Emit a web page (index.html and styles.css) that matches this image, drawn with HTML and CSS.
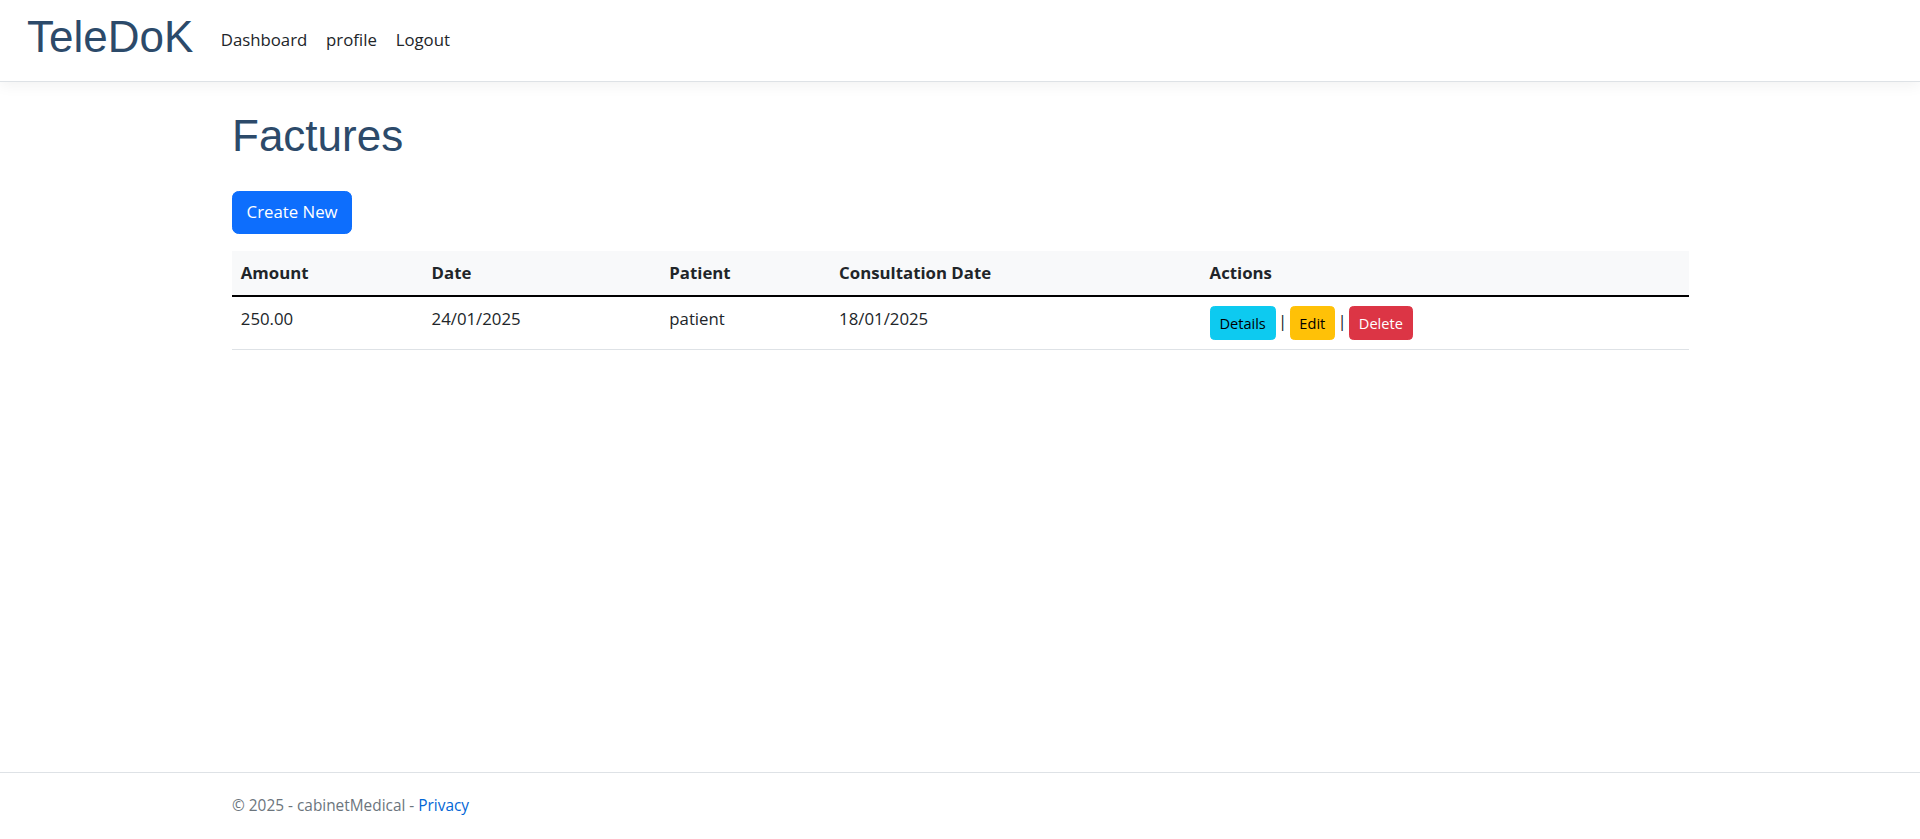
FILE: index.html
```html
<!DOCTYPE html>
<html lang="fr">
<head>
<meta charset="utf-8">
<title>Factures - cabinetMedical</title>
<link rel="stylesheet" href="styles.css">
</head>
<body>
<header class="site-header">
  <nav class="navbar">
    <a class="brand" href="#">TeleDoK</a>
    <ul class="nav-links">
      <li><a class="nav-link" href="#">Dashboard</a></li>
      <li><a class="nav-link" href="#">profile</a></li>
      <li><a class="nav-link" href="#">Logout</a></li>
    </ul>
  </nav>
</header>
<main class="container main">
  <h1 class="page-title">Factures</h1>
  <p class="actions-top"><a class="btn btn-primary" href="#">Create New</a></p>
  <table class="table">
    <thead>
      <tr>
        <th class="col-amount">Amount</th>
        <th class="col-date">Date</th>
        <th class="col-patient">Patient</th>
        <th class="col-cdate">Consultation Date</th>
        <th class="col-actions">Actions</th>
      </tr>
    </thead>
    <tbody>
      <tr>
        <td>250.00</td>
        <td>24/01/2025</td>
        <td>patient</td>
        <td>18/01/2025</td>
        <td class="cell-actions"><a class="btn btn-sm btn-info" href="#">Details</a> | <a class="btn btn-sm btn-warning" href="#">Edit</a> | <a class="btn btn-sm btn-danger" href="#">Delete</a></td>
      </tr>
    </tbody>
  </table>
</main>
<footer class="site-footer">
  <div class="container footer-inner">&copy; 2025 - cabinetMedical - <a class="footer-link" href="#">Privacy</a></div>
</footer>
</body>
</html>
```
FILE: styles.css
```css
* { box-sizing: border-box; }

html, body { height: 100%; }

body {
  margin: 0;
  min-height: 100vh;
  display: flex;
  flex-direction: column;
  font-family: "Open Sans", "Noto Sans", sans-serif;
  font-size: 16.8px;
  line-height: 26.4px;
  color: #212529;
  background: #fff;
}

a { text-decoration: none; }

.site-header {
  border-bottom: 1px solid #dee2e6;
  box-shadow: 0 4.4px 13.2px rgba(0, 0, 0, 0.05);
  background: #fff;
}

.navbar {
  height: 81px;
  display: flex;
  align-items: center;
  padding-left: 27px;
}

.brand {
  font-family: "Liberation Sans", Arial, sans-serif;
  font-size: 44px;
  line-height: 52px;
  padding-bottom: 8px;
  color: #2c4a6a;
  margin-right: 18px;
}

.nav-links {
  list-style: none;
  margin: 0;
  padding: 0;
  display: flex;
}

.nav-link {
  display: block;
  padding: 0 9.4px;
  color: #212529;
}

.container {
  width: 1458px;
  margin: 0 auto;
  padding-left: 1px;
}

.main {
  flex: 1;
  padding-top: 28px;
}

.page-title {
  font-family: "Liberation Sans", Arial, sans-serif;
  font-weight: 400;
  font-size: 44px;
  line-height: 52.8px;
  color: #2c4a6a;
  margin: 0 0 28px;
}

.actions-top {
  margin: 0 0 17.6px;
}

.btn {
  display: inline-block;
  border: 1px solid transparent;
  text-align: center;
  vertical-align: middle;
}

.btn-primary {
  background: #0d6efd;
  border-color: #0d6efd;
  color: #fff;
  padding: 7.3px 13.6px;
  border-radius: 6.6px;
}

.table {
  width: 100%;
  border-collapse: collapse;
}

.table th,
.table td {
  padding: 8.8px;
  text-align: left;
  vertical-align: top;
  border-bottom: 1px solid #dee2e6;
}

.table thead th {
  background: #f8f9fa;
  font-weight: 700;
  border-bottom: 2px solid #000;
}

.col-amount { width: 191px; }
.col-date { width: 238px; }
.col-patient { width: 170px; }
.col-cdate { width: 371px; }
.col-actions { width: 489px; }

.cell-actions { word-spacing: -2px; }

.btn-sm {
  font-size: 14.6px;
  line-height: 23.1px;
  padding: 4.4px 8.8px;
  border-radius: 4.4px;
  word-spacing: normal;
}

.btn-info { background: #0dcaf0; border-color: #0dcaf0; color: #000; }
.btn-warning { background: #ffc107; border-color: #ffc107; color: #000; }
.btn-danger { background: #dc3545; border-color: #dc3545; color: #fff; }

.site-footer {
  border-top: 1px solid #dee2e6;
  color: #6c757d;
  font-size: 15.4px;
  line-height: 66px;
  white-space: nowrap;
}

.footer-link { color: #0366d6; }
```
